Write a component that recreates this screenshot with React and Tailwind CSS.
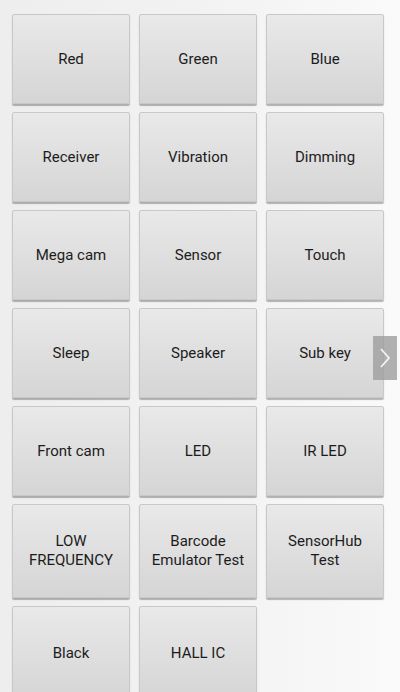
import React from "react";

const rows = [
  ["Red", "Green", "Blue"],
  ["Receiver", "Vibration", "Dimming"],
  ["Mega cam", "Sensor", "Touch"],
  ["Sleep", "Speaker", "Sub key"],
  ["Front cam", "LED", "IR LED"],
  ["LOW\nFREQUENCY", "Barcode\nEmulator Test", "SensorHub\nTest"],
  ["Black", "HALL IC"],
];

function Btn({ label, tall }) {
  return (
    <div
      className={`flex items-center justify-center text-center rounded-[2px] bg-gradient-to-b from-[#e9e9e9] to-[#d5d5d5] border border-[#c8c8c8] shadow-[0_2px_1px_rgba(0,0,0,0.28)] text-[15px] leading-[19px] text-[#1c1c1c] whitespace-pre-line ${tall}`}
      style={{ fontFamily: "Roboto, 'Liberation Sans', sans-serif" }}
    >
      {label}
    </div>
  );
}

export default function App() {
  return (
    <div className="relative w-[400px] h-[692px] overflow-hidden bg-gradient-to-r from-[#eeeeee] via-[#f2f2f2] to-[#fafafa]">
      <div className="grid grid-cols-[118px_118px_118px] gap-x-[9px] gap-y-[8px] pl-[12px] pt-[14px]">
        {rows.map((r, i) =>
          r.map((l) => (
            <Btn
              key={l}
              label={l}
              tall={i === 5 ? "h-[94px]" : i === 6 ? "h-[94px]" : "h-[90px]"}
            />
          ))
        )}
      </div>
      <div className="absolute left-[373px] top-[336px] w-[24px] h-[44px] bg-[#9e9e9e]/80 flex items-center justify-center">
        <svg width="12" height="22" viewBox="0 0 12 22" fill="none">
          <path d="M2 2 L10 11 L2 20" stroke="#f4f4f4" strokeWidth="1.8" />
        </svg>
      </div>
    </div>
  );
}
